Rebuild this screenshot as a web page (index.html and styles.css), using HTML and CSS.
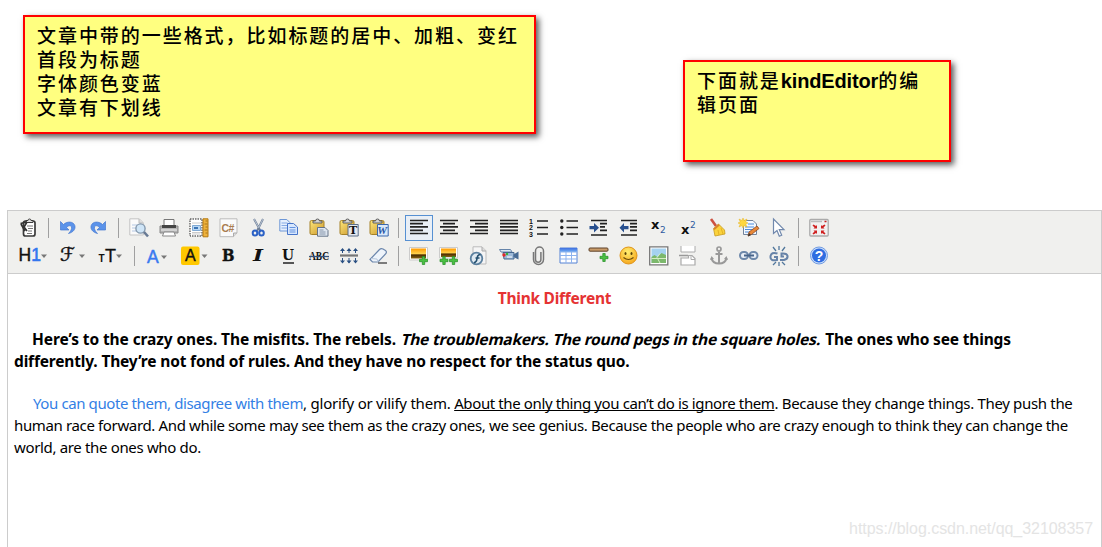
FILE: index.html
```html
<!DOCTYPE html>
<html lang="zh">
<head>
<meta charset="utf-8">
<title>KindEditor</title>
<link rel="stylesheet" href="styles.css">
</head>
<body>
<svg class="defs" width="0" height="0">
  <defs>
    <linearGradient id="gold" x1="0" y1="0" x2="1" y2="1"><stop offset="0" stop-color="#ffe87a"/><stop offset="1" stop-color="#c9952c"/></linearGradient>
    <linearGradient id="sky" x1="0" y1="0" x2="0" y2="1"><stop offset="0" stop-color="#ff9a00"/><stop offset=".5" stop-color="#ffcf4a"/><stop offset=".65" stop-color="#4a2c00"/><stop offset="1" stop-color="#8a6414"/></linearGradient>
    <linearGradient id="blue" x1="0" y1="0" x2="0" y2="1"><stop offset="0" stop-color="#3f6fe0"/><stop offset="1" stop-color="#72b0f2"/></linearGradient>
    <radialGradient id="face" cx=".45" cy=".3" r=".75"><stop offset="0" stop-color="#ffee70"/><stop offset="1" stop-color="#f5a318"/></radialGradient>
    <g id="board">
      <rect x="1" y="2.500" width="14" height="14" rx="1.500" fill="url(#gold)" stroke="#a68228"/>
      <path d="M4 5V3h2.500a2 2 0 0 1 4 0H13v2z" fill="#d4d4d4" stroke="#555" stroke-width=".9"/>
    </g>
    <path id="plus" d="M2.800 0h2.400v2.800H8v2.400H5.200V8H2.800V5.200H0V2.800h2.800z" fill="#4bc043" stroke="#218c22" stroke-width=".7"/>
    <path id="undo" d="M1.500 3.500v8.500H10L7.600 9.500C9 7.500 12 7 12.500 9c.4 2-.5 4-3 6.500C14 14.500 17 11 15.800 7.500 14.500 3.500 8.500 2.800 4.500 6.500z" fill="#5b93ea" stroke="#4679d0" stroke-width=".7"/>
  </defs>
</svg>

<div class="notes">
  <div class="note note-format">
    <p>文章中带的一些格式，比如标题的居中、加粗、变红</p>
    <p>首段为标题</p>
    <p>字体颜色变蓝</p>
    <p>文章有下划线</p>
  </div>
  <div class="note note-editor">
    <p>下面就是<b>kindEditor</b>的编</p>
    <p>辑页面</p>
  </div>
</div>

<div class="editor">
  <div class="toolbar">
    <div class="row">
      <span class="item"><svg viewBox="0 0 20 20"><rect x="4.500" y="3" width="11.500" height="15" rx="2" fill="#fff" stroke="#3b3b3b" stroke-width="1.700"/><path d="M7 4.500V2.500h2a1.500 1.500 0 0 1 3 0h2v2z" fill="#ddd" stroke="#3b3b3b"/><path d="M8 8h6M9 10.500h5M9 13h4M8 15.500h5" stroke="#777"/><path d="M8 4L5 9l3 4" fill="none" stroke="#333" stroke-width="1.700"/><path d="M1.500 5.500L8 4M2 6l4 7" stroke="#333" stroke-width="1.700"/></svg></span>
      <span class="sep"></span>
      <span class="item"><svg viewBox="0 0 20 20"><use href="#undo"/></svg></span>
      <span class="item"><svg viewBox="0 0 20 20"><use href="#undo" transform="translate(18 0) scale(-1 1)"/></svg></span>
      <span class="sep"></span>
      <span class="item"><svg viewBox="0 0 20 20"><path d="M.8.800h9.500l4 4V17H.8z" fill="#fafafa" stroke="#c4c4c4"/><path d="M10 1v4h4" fill="#ddd" stroke="#bbb"/><path d="M3 7h5M3 10h4M3 13h6" stroke="#b4c8e4"/><circle cx="11.500" cy="10.500" r="4.600" fill="#cfe5f7" stroke="#8398ad" stroke-width="1.400"/><path d="M15 14l4 4.500" stroke="#687a94" stroke-width="2.600"/></svg></span>
      <span class="item"><svg viewBox="0 0 20 20"><path d="M5 8V1.500h10V8" fill="#fdfdfd" stroke="#777"/><path d="M1 8h18v7H1z" fill="#b4b4b4" stroke="#888"/><path d="M3 7h14v3H3z" fill="#444"/><path d="M2 12h16" stroke="#ddd" stroke-width="1.500"/><path d="M5 14h10l1.500 4h-13z" fill="#fff" stroke="#888"/></svg></span>
      <span class="item"><svg viewBox="0 0 20 20"><path d="M1 1h12v17H1z" fill="#fff" stroke="#222" stroke-dasharray="1.500 1"/><path d="M3 5h9M3 14.500h9M3 16h8" stroke="#ccc"/><path d="M3.500 7.500h8v5h-8z" fill="#b9d7f3" stroke="#7fa9d4"/><path d="M5 10h4" stroke="#3b74b5" stroke-width="2"/><path d="M14 .800h5v18h-5z" fill="#eeb23c" stroke="#b57910"/><path d="M16.500 3h2M15.500 6h3M16.500 9h2M15.500 12h3M16.500 15h2" stroke="#a8741a"/></svg></span>
      <span class="item"><svg viewBox="0 0 20 20"><path d="M1 .800h17V15l-3.500 3.700H1z" fill="#fafafa" stroke="#bbb"/><path d="M14.500 18.500V15H18" fill="#ddd" stroke="#aaa"/><text x="2.500" y="13.500" class="glyph code">C#</text></svg></span>
      <span class="item"><svg viewBox="0 0 20 20"><path d="M5 1l6.500 12M14 1L8 13" stroke="#6f7f96" stroke-width="2"/><path d="M5 1l5 9M14 1l-4 8" stroke="#c9d4e2" stroke-width=".8"/><ellipse cx="6" cy="15" rx="2.300" ry="2.500" fill="none" stroke="#2b61c5" stroke-width="2"/><ellipse cx="12.500" cy="15" rx="2.300" ry="2.500" fill="none" stroke="#2b61c5" stroke-width="2"/></svg></span>
      <span class="item"><svg viewBox="0 0 20 20"><path d="M.8 1.500h7l3 3V13H.8z" fill="#e5effd" stroke="#6e97d6"/><path d="M2.500 5h6M2.500 7.500h6M2.500 10h6" stroke="#86aae4"/><path d="M8.500 5.500h6l4 3.500V16.500h-10z" fill="#d8e7fd" stroke="#4775c9"/><path d="M10.500 9.500h6M10.500 12h6M10.500 14h6" stroke="#6493df"/></svg></span>
      <span class="item"><svg viewBox="0 0 20 20"><use href="#board"/><path d="M8.500 9.500H16l3 3v5.700H8.500z" fill="#dde5ef" stroke="#667488"/><path d="M10.500 12h4M10.500 14h6M10.500 16h6" stroke="#8796aa"/></svg></span>
      <span class="item"><svg viewBox="0 0 20 20"><use href="#board"/><path d="M9 6.500h10.200V18H9z" fill="#e3e8ef" stroke="#5c6f8a"/><text x="10" y="16.300" class="glyph tee">T</text></svg></span>
      <span class="item"><svg viewBox="0 0 20 20"><use href="#board"/><path d="M8.500 6.500h10.700V18H8.500z" fill="#d9e8fa" stroke="#3b68ad"/><text x="8.300" y="16" class="glyph word">W</text></svg></span>
      <span class="sep"></span>
      <span class="item selected"><svg viewBox="0 0 20 20"><path d="M1 2.500h18M1 5.700h13M1 8.900h18M1 12.300h13M1 15.500h18" class="bar"/></svg></span>
      <span class="item"><svg viewBox="0 0 20 20"><path d="M1 2.500h18M4 5.700h12M1 8.900h18M4 12.300h12M1 15.500h18" class="bar"/></svg></span>
      <span class="item"><svg viewBox="0 0 20 20"><path d="M1 2.500h18M6 5.700h13M1 8.900h18M6 12.300h13M1 15.500h18" class="bar"/></svg></span>
      <span class="item"><svg viewBox="0 0 20 20"><path d="M1 2.500h18M1 5.700h18M1 8.900h18M1 12.300h18M1 15.500h18" class="bar"/></svg></span>
      <span class="item"><svg viewBox="0 0 20 20"><path d="M8 3h11M8 9.500h11M8 16h11" class="bar"/><text x="0" y="5.500" class="glyph num">1</text><text x="0" y="12" class="glyph num">2</text><text x="0" y="18.500" class="glyph num">3</text></svg></span>
      <span class="item"><svg viewBox="0 0 20 20"><path d="M7.500 3H19M7.500 9.500H19M7.500 16H19" class="bar"/><g fill="#222"><circle cx="2.800" cy="3" r="1.700"/><circle cx="2.800" cy="9.500" r="1.700"/><circle cx="2.800" cy="16" r="1.700"/></g></svg></span>
      <span class="item"><svg viewBox="0 0 20 20"><path d="M2 2.500h16M11 5.700h7M11 8.900h5M11 12.300h7M2 17h16" class="bar"/><path d="M.5 8H5V5l5 4.700-5 4.800v-3.200H.5z" fill="#28508f"/></svg></span>
      <span class="item"><svg viewBox="0 0 20 20"><path d="M2 2.500h16M11 5.700h7M11 8.900h7M11 12.300h7M2 17h16" class="bar"/><path d="M9.500 8H5V5L.5 9.700 5 14.500v-3.200h4.500z" fill="#28508f"/></svg></span>
      <span class="item"><svg viewBox="0 0 20 20"><text x="2" y="11" class="glyph ex">x</text><text x="11" y="15" class="glyph two">2</text></svg></span>
      <span class="item"><svg viewBox="0 0 20 20"><text x="2" y="16" class="glyph ex">x</text><text x="11" y="9.500" class="glyph two">2</text></svg></span>
      <span class="item"><svg viewBox="0 0 20 20"><path d="M2 1l5 7" stroke="#cc5140" stroke-width="2.600"/><path d="M4.500 10.500l5-4.500 6 6 .5 4-10 2z" fill="#fad23c" stroke="#c79b20" stroke-width=".8"/><path d="M4.500 10.500l5-4.500 1.200 1.500-5.200 4.500z" fill="#d9822c"/><path d="M9 12l1 5M12 10l2 6" stroke="#e5b325"/></svg></span>
      <span class="item"><svg viewBox="0 0 20 20"><path d="M4.500 2.500H14L17.500 6v10.500h-13z" fill="#f4f9ff" stroke="#72839b"/><path d="M9 6h6M6 9h9M6 11.500h8M6 14h6" stroke="#4d8ddd" stroke-width="1.200"/><path d="M4 0l1 2.500L8 1 6.700 4 9 5 6.700 6 8 9 5 7.500 4 10 3 7.500 0 9l1.300-3L-1 5l2.300-1L0 1l3 1.500z" fill="#ffd83f" stroke="#e4b321" stroke-width=".5"/><path d="M9 18l1-4 8-6 2 2.500-7.500 6z" fill="#e98837" stroke="#8d4820" stroke-width=".8"/><path d="M9 18.500l1-3.500 2 2z" fill="#333"/></svg></span>
      <span class="item"><svg viewBox="0 0 20 20"><path d="M4.500 1v14.500l3.500-3 2.300 5.700 2.400-1-2.400-5.500H15z" fill="#fff" stroke="#7189ad" stroke-width="1.200"/></svg></span>
      <span class="sep"></span>
      <span class="item"><svg viewBox="0 0 20 20"><rect x=".8" y="1.500" width="18.400" height="16.500" rx="1" fill="#f2f0f0" stroke="#aaa" stroke-width="1.300"/><path d="M2 3.500h11" stroke="#bbb" stroke-width="1.500"/><path d="M15.500 3.500h2" stroke="#c22020" stroke-width="1.500"/><path d="M3.500 7.500l1-1L7 8l1-1v3.500H4.500l1-1zM16.500 7.500l-1-1L13 8l-1-1v3.500h3.500l-1-1zM3.500 15.500l1 1L7 15l1 1v-3.500H4.500l1 1zM16.500 15.500l-1 1L13 15l-1 1v-3.500h3.500l-1 1z" fill="#d02020"/></svg></span>
    </div>
    <div class="row">
      <span class="item drop"><svg viewBox="0 0 36 20"><text x="2.500" y="15" class="glyph head">H<tspan class="lit">1</tspan></text><path d="M25 8.500h6l-3 3.500z" class="arrow"/></svg></span>
      <span class="item drop"><svg viewBox="0 0 36 20"><text x="5" y="15" class="glyph script">ℱ</text><path d="M24 8.500h6l-3 3.500z" class="arrow"/></svg></span>
      <span class="item drop narrow"><svg viewBox="0 0 36 20"><text x="5.500" y="15.500" class="glyph small">T</text><text x="12" y="15.500" class="glyph large">T</text><path d="M23 8.500h6l-3 3.500z" class="arrow"/></svg></span>
      <span class="sep"></span>
      <span class="item drop color"><svg viewBox="0 0 36 20"><text x="6" y="16.500" class="glyph fore">A</text><path d="M20 9.500h6l-3 3.500z" class="arrow"/></svg></span>
      <span class="item drop color"><svg viewBox="0 0 36 20"><rect x="3" y=".5" width="18.500" height="18.500" rx="2" fill="#ffc800"/><text x="7" y="15" class="glyph back">A</text><path d="M23.500 8.500h6l-3 3.500z" class="arrow"/></svg></span>
      <span class="item"><svg viewBox="0 0 20 20"><text x="3" y="15" class="glyph bold" textLength="12.500" lengthAdjust="spacingAndGlyphs">B</text></svg></span>
      <span class="item"><svg viewBox="0 0 20 20"><text x="4" y="15" class="glyph italic" textLength="10" lengthAdjust="spacingAndGlyphs">I</text></svg></span>
      <span class="item"><svg viewBox="0 0 20 20"><text x="3" y="13.500" class="glyph under" textLength="12" lengthAdjust="spacingAndGlyphs">U</text><path d="M4 17h11" stroke="#222" stroke-width="1.500"/></svg></span>
      <span class="item"><svg viewBox="0 0 20 20"><text x="0" y="14" class="glyph abc" textLength="20" lengthAdjust="spacingAndGlyphs">ABC</text><path d="M0 10.500h20" stroke="#35517c" stroke-width="1.300"/></svg></span>
      <span class="item"><svg viewBox="0 0 20 20"><path d="M1 9.500h18" stroke="#777" stroke-width="2.200"/><path d="M3.500 7V3M10 7V3M16.500 7V3M3.500 12v5M10 12v5M16.500 12v5" stroke="#294f82"/><path d="M1 5l2.500-3L6 5zM7.500 5L10 2l2.500 3zM14 5l2.500-3L19 5zM1 14.500l2.500 3 2.500-3zM7.500 14.500l2.500 3 2.500-3zM14 14.500l2.500 3 2.500-3z" fill="#294f82"/></svg></span>
      <span class="item"><svg viewBox="0 0 20 20"><path d="M1 13.500L10.500 3.500Q12 2 14 3l2.500 1.500q1.500 1 .5 3L9 16H3.500z" fill="#eef4fb" stroke="#6b86ac" stroke-width="1.200"/><path d="M2 12.500l6 .5 1 3" fill="none" stroke="#b9c8dc"/><path d="M9 17h9" stroke="#555" stroke-width="1.500"/></svg></span>
      <span class="sep"></span>
      <span class="item"><svg viewBox="0 0 20 20"><path d="M.5 1.500h18V14H.5z" fill="#fff" stroke="#ccc"/><path d="M2 2.500h15v10H2z" fill="url(#sky)"/><use href="#plus" x="10.500" y="10.500"/></svg></span>
      <span class="item"><svg viewBox="0 0 20 20"><path d="M.5 1.500h18V12H.5z" fill="#fff" stroke="#ccc"/><path d="M2 2.500h15v8.500H2z" fill="url(#sky)"/><use href="#plus" x="1" y="10.500"/><use href="#plus" x="10.500" y="10.500"/></svg></span>
      <span class="item"><svg viewBox="0 0 20 20"><path d="M4 .800h9l4 4V18H4z" fill="#f5f5f5" stroke="#bbb"/><path d="M13 1v4h4" fill="#ddd" stroke="#aaa"/><circle cx="7.500" cy="12.500" r="5.800" fill="#dfe9f1" stroke="#5a7f9e" stroke-width="1.800"/><path d="M11.500 8.500q-3 0-3.500 4t-3 4M6.500 12h4" fill="none" stroke="#24506f" stroke-width="1.700"/></svg></span>
      <span class="item"><svg viewBox="0 0 20 20"><path d="M.5 3.500h11L13 6H2z" fill="#dce7f4" stroke="#6685aa"/><path d="M4 6.500h11V13H5z" fill="#9db9d9" stroke="#45668e"/><path d="M14.500 8.500l5-3v8l-5-2.500z" fill="#486b95"/><circle cx="5" cy="9" r="1.700" fill="#e32828"/><circle cx="8" cy="8" r="1.200" fill="#37b237"/><path d="M8 11h5" stroke="#fff"/></svg></span>
      <span class="item"><svg viewBox="0 0 20 20"><path d="M4.500 6v7.500a5 5 0 0 0 10 0V5a4 4 0 0 0-8 0v8.500a2.700 2.700 0 0 0 5.400 0V6" fill="none" stroke="#777" stroke-width="1.500"/></svg></span>
      <span class="item"><svg viewBox="0 0 20 20"><path d="M1 2h17v15H1z" fill="#fff" stroke="#5482d4"/><path d="M1 2h17v4H1z" fill="url(#blue)"/><path d="M1 6h17M1 9.500h17M1 13h17M7 6v11M12.500 6v11" stroke="#8db3ee"/></svg></span>
      <span class="item"><svg viewBox="0 0 20 20"><rect x="0" y="2" width="19" height="3.200" rx="1" fill="#c99b68" stroke="#5f432b"/><use href="#plus" x="11" y="7.500"/></svg></span>
      <span class="item"><svg viewBox="0 0 20 20"><circle cx="9.500" cy="9.500" r="8.500" fill="url(#face)" stroke="#df9418"/><ellipse cx="6.500" cy="7.500" rx="1" ry="1.500" fill="#5b4208"/><ellipse cx="12.500" cy="7.500" rx="1" ry="1.500" fill="#5b4208"/><path d="M4.500 11.500q5 4 10 0" fill="none" stroke="#684908" stroke-width="1.200"/></svg></span>
      <span class="item"><svg viewBox="0 0 20 20"><path d="M.7.800h18.100v18H.7z" fill="#fff" stroke="#777" stroke-width="1.300"/><path d="M2.500 2.500h14.500v14.500h-14.500z" fill="#a5d2f0"/><path d="M2.500 11l3-2 3 2 4-4 4.500 2v8h-14.500z" fill="#7cb86c"/><path d="M11 7.500l-3 4 3 5.500M2.500 12.500H17" fill="none" stroke="#d5ecc4" stroke-width="1"/></svg></span>
      <span class="item"><svg viewBox="0 0 20 20"><path d="M2 0v6h14V0" fill="#fff" stroke="#aaa"/><path d="M0 9.500h9" stroke="#999" stroke-width="1.500"/><path d="M2 19v-7h7.500V9.500H13l3 3V19z" fill="#fff" stroke="#aaa" stroke-width="1.200"/><path d="M12 9.500v4h4" fill="none" stroke="#aaa"/></svg></span>
      <span class="item"><svg viewBox="0 0 20 20"><circle cx="10" cy="3" r="2" fill="none" stroke="#999" stroke-width="1.700"/><path d="M10 5.500v12M6.500 8h7M2.500 12q1 5.500 7.500 5.500t7.500-5.500" fill="none" stroke="#999" stroke-width="2"/><path d="M1 14l1.500-4L5 13zM15 13l2.500-3 1.500 4z" fill="#999"/></svg></span>
      <span class="item"><svg viewBox="0 0 20 20"><rect x="1" y="6" width="8" height="7" rx="3.500" fill="#e8eef6" stroke="#6e89ab" stroke-width="2"/><rect x="10.500" y="6" width="8" height="7" rx="3.500" fill="#e8eef6" stroke="#6e89ab" stroke-width="2"/><path d="M5 9.500h10" stroke="#48658a" stroke-width="2"/></svg></span>
      <span class="item"><svg viewBox="0 0 20 20"><path d="M8.500 7.500Q2 5.500 1.500 10.500T8 14v-3H5M11 14h4q4-1 3.500-4t-6-2.500v3H15" fill="none" stroke="#6783a8" stroke-width="2"/><path d="M7 5L4 1M10 4V0M13 5l3-4M7 16l-3 3M10 16v4M13 16l3 3" stroke="#53789d" stroke-width="1.300"/></svg></span>
      <span class="sep"></span>
      <span class="item"><svg viewBox="0 0 20 20"><circle cx="10" cy="9.500" r="8.500" fill="#c8dcfa" stroke="#739ce0"/><circle cx="10" cy="9.500" r="7" fill="#2f6de1"/><text x="5.800" y="14.500" class="glyph help">?</text></svg></span>
    </div>
  </div>
  <div class="content">
    <h3 class="title">Think Different</h3>
    <div class="para strong">
      <div class="line indent"><span class="s1">Here’s to the crazy ones. The misfits. The rebels. </span><span class="slant">The troublemakers. The round pegs in the square holes.</span><span class="s3"> The ones who see things</span></div>
      <div class="line s4">differently. They’re not fond of rules. And they have no respect for the status quo.</div>
    </div>
    <div class="para">
      <div class="line indent more"><span class="quote">You can quote them, disagree with them</span><span class="p1">, glorify or vilify them. </span><span class="ignore">About the only thing you can’t do is ignore them</span><span class="p2">. Because they change things. They push the</span></div>
      <div class="line p3">human race forward. And while some may see them as the crazy ones, we see genius. Because the people who are crazy enough to think they can change the</div>
      <div class="line p4">world, are the ones who do.</div>
    </div>
  </div>
</div>
<div class="watermark">https://blog.csdn.net/qq_32108357</div>
</body>
</html>
```
FILE: styles.css
```css
* { box-sizing: border-box; }
body { margin: 0; background: #fff; height: 547px; overflow: hidden; position: relative; font-family: "Noto Sans", sans-serif; }
.defs { display: block; height: 0; }
.notes { display: flex; justify-content: space-between; align-items: flex-start; height: 210px; padding: 15px 151px 0 23px; }
.note { background: #ffff80; border: 2px solid #f00; box-shadow: 3px 3px 6px rgba(0,0,0,.65); padding: 8px 0 0 12px; color: #000; font: 500 19px/24px "Liberation Sans", "Noto Sans CJK SC", sans-serif; letter-spacing: 1.95px; white-space: nowrap; }
.note p { margin: 0; height: 24px; }
.note b { font-size: 20px; letter-spacing: -.15px; line-height: 20px; }
.note-format { width: 513px; height: 119px; }
.note-editor { width: 268px; height: 102px; margin-top: 45px; }

.editor { margin: 0 0 0 7px; width: 1095px; height: 350px; border: 1px solid #ccc; }
.toolbar { height: 63px; padding: 3px 0 0 6px; background: #f0f0ee; border-bottom: 1px solid #ccc; }
.row { display: flex; height: 28px; align-items: center; }
.item { display: flex; justify-content: center; align-items: center; width: 28px; height: 26px; margin: 0 1px; flex: none; }
.item svg { width: 20px; height: 20px; flex: none; overflow: visible; fill: none; }
.item.drop { width: 37px; }
.item.drop.narrow { width: 36px; }
.item.drop.color { width: 35px; }
.item.drop svg { width: 36px; }
.selected { border: 1px solid #5690d2; background: #e9eff6; }
.sep { width: 1px; height: 20px; margin: 0 5px 0 4px; background: #a0a0a0; flex: none; }
.bar { stroke: #222; stroke-width: 1.7; }
.arrow { fill: #777; }

.glyph { font-family: "Liberation Serif", serif; fill: #111; font-weight: bold; }
.code { font: bold 10.5px "Liberation Sans", sans-serif; fill: #a97c50; letter-spacing: -.6px; }
.tee { font: bold 11px "DejaVu Serif", serif; }
.word { font-size: 11px; font-style: italic; fill: #2756a5; }
.num { font: bold 7px "Liberation Sans", sans-serif; }
.ex { font: bold 13px "DejaVu Sans", sans-serif; }
.two { font: 9px "DejaVu Sans", sans-serif; fill: #2f5ba0; }
.head { font: 17.5px "Liberation Sans", sans-serif; stroke: #111; stroke-width: .4; }
.lit { fill: #3377ee; stroke: #3377ee; stroke-width: .6; }
.script { font: 19px "DejaVu Sans", serif; stroke: #111; stroke-width: .4; }
.small { font: bold 10px "Liberation Sans", sans-serif; }
.large { font: 18px "Liberation Sans", sans-serif; stroke: #111; stroke-width: .3; }
.fore { font: 17.5px "Liberation Sans", sans-serif; fill: #3a7af0; stroke: #3a7af0; stroke-width: .5; }
.back { font: 16px "Liberation Sans", sans-serif; stroke: #111; stroke-width: .4; }
.bold { font: bold 16px "DejaVu Serif", serif; stroke: #111; stroke-width: .4; }
.italic { font: italic bold 16px "DejaVu Serif", serif; }
.under { font: bold 14px "DejaVu Serif", serif; }
.abc { font-size: 11.5px; }
.help { font: bold 14px "Liberation Sans", sans-serif; fill: #fff; }

.content { padding: 13px 6px 0; color: #000; font-size: 15px; line-height: 22px; white-space: nowrap; }
.title { margin: 0 0 19px; color: #e53333; font-size: 15.5px; line-height: 22px; text-align: center; letter-spacing: -.25px; }
.para { margin: 0 0 20px; }
.line { height: 22px; white-space: pre; }
.strong { font-weight: bold; font-size: 15.5px; }
.indent { padding-left: 18px; }
.indent.more { padding-left: 19px; }
.s1 { letter-spacing: -.1px; }
.s3, .s4 { letter-spacing: -.17px; }
.slant { display: inline-block; padding-left: 2px; letter-spacing: -.2px; transform: skewX(-14deg); }
.quote { color: #337fe5; letter-spacing: -.4px; }
.p1 { letter-spacing: -.23px; }
.ignore { text-decoration: underline; text-decoration-skip-ink: none; letter-spacing: -.385px; }
.p2 { letter-spacing: -.33px; }
.p3 { letter-spacing: -.36px; }
.p4 { letter-spacing: -.34px; }
.watermark { position: absolute; right: 9px; bottom: 9px; font: 16px/18px "Liberation Sans", sans-serif; letter-spacing: -.05px; color: #e4e4e4; }
```
